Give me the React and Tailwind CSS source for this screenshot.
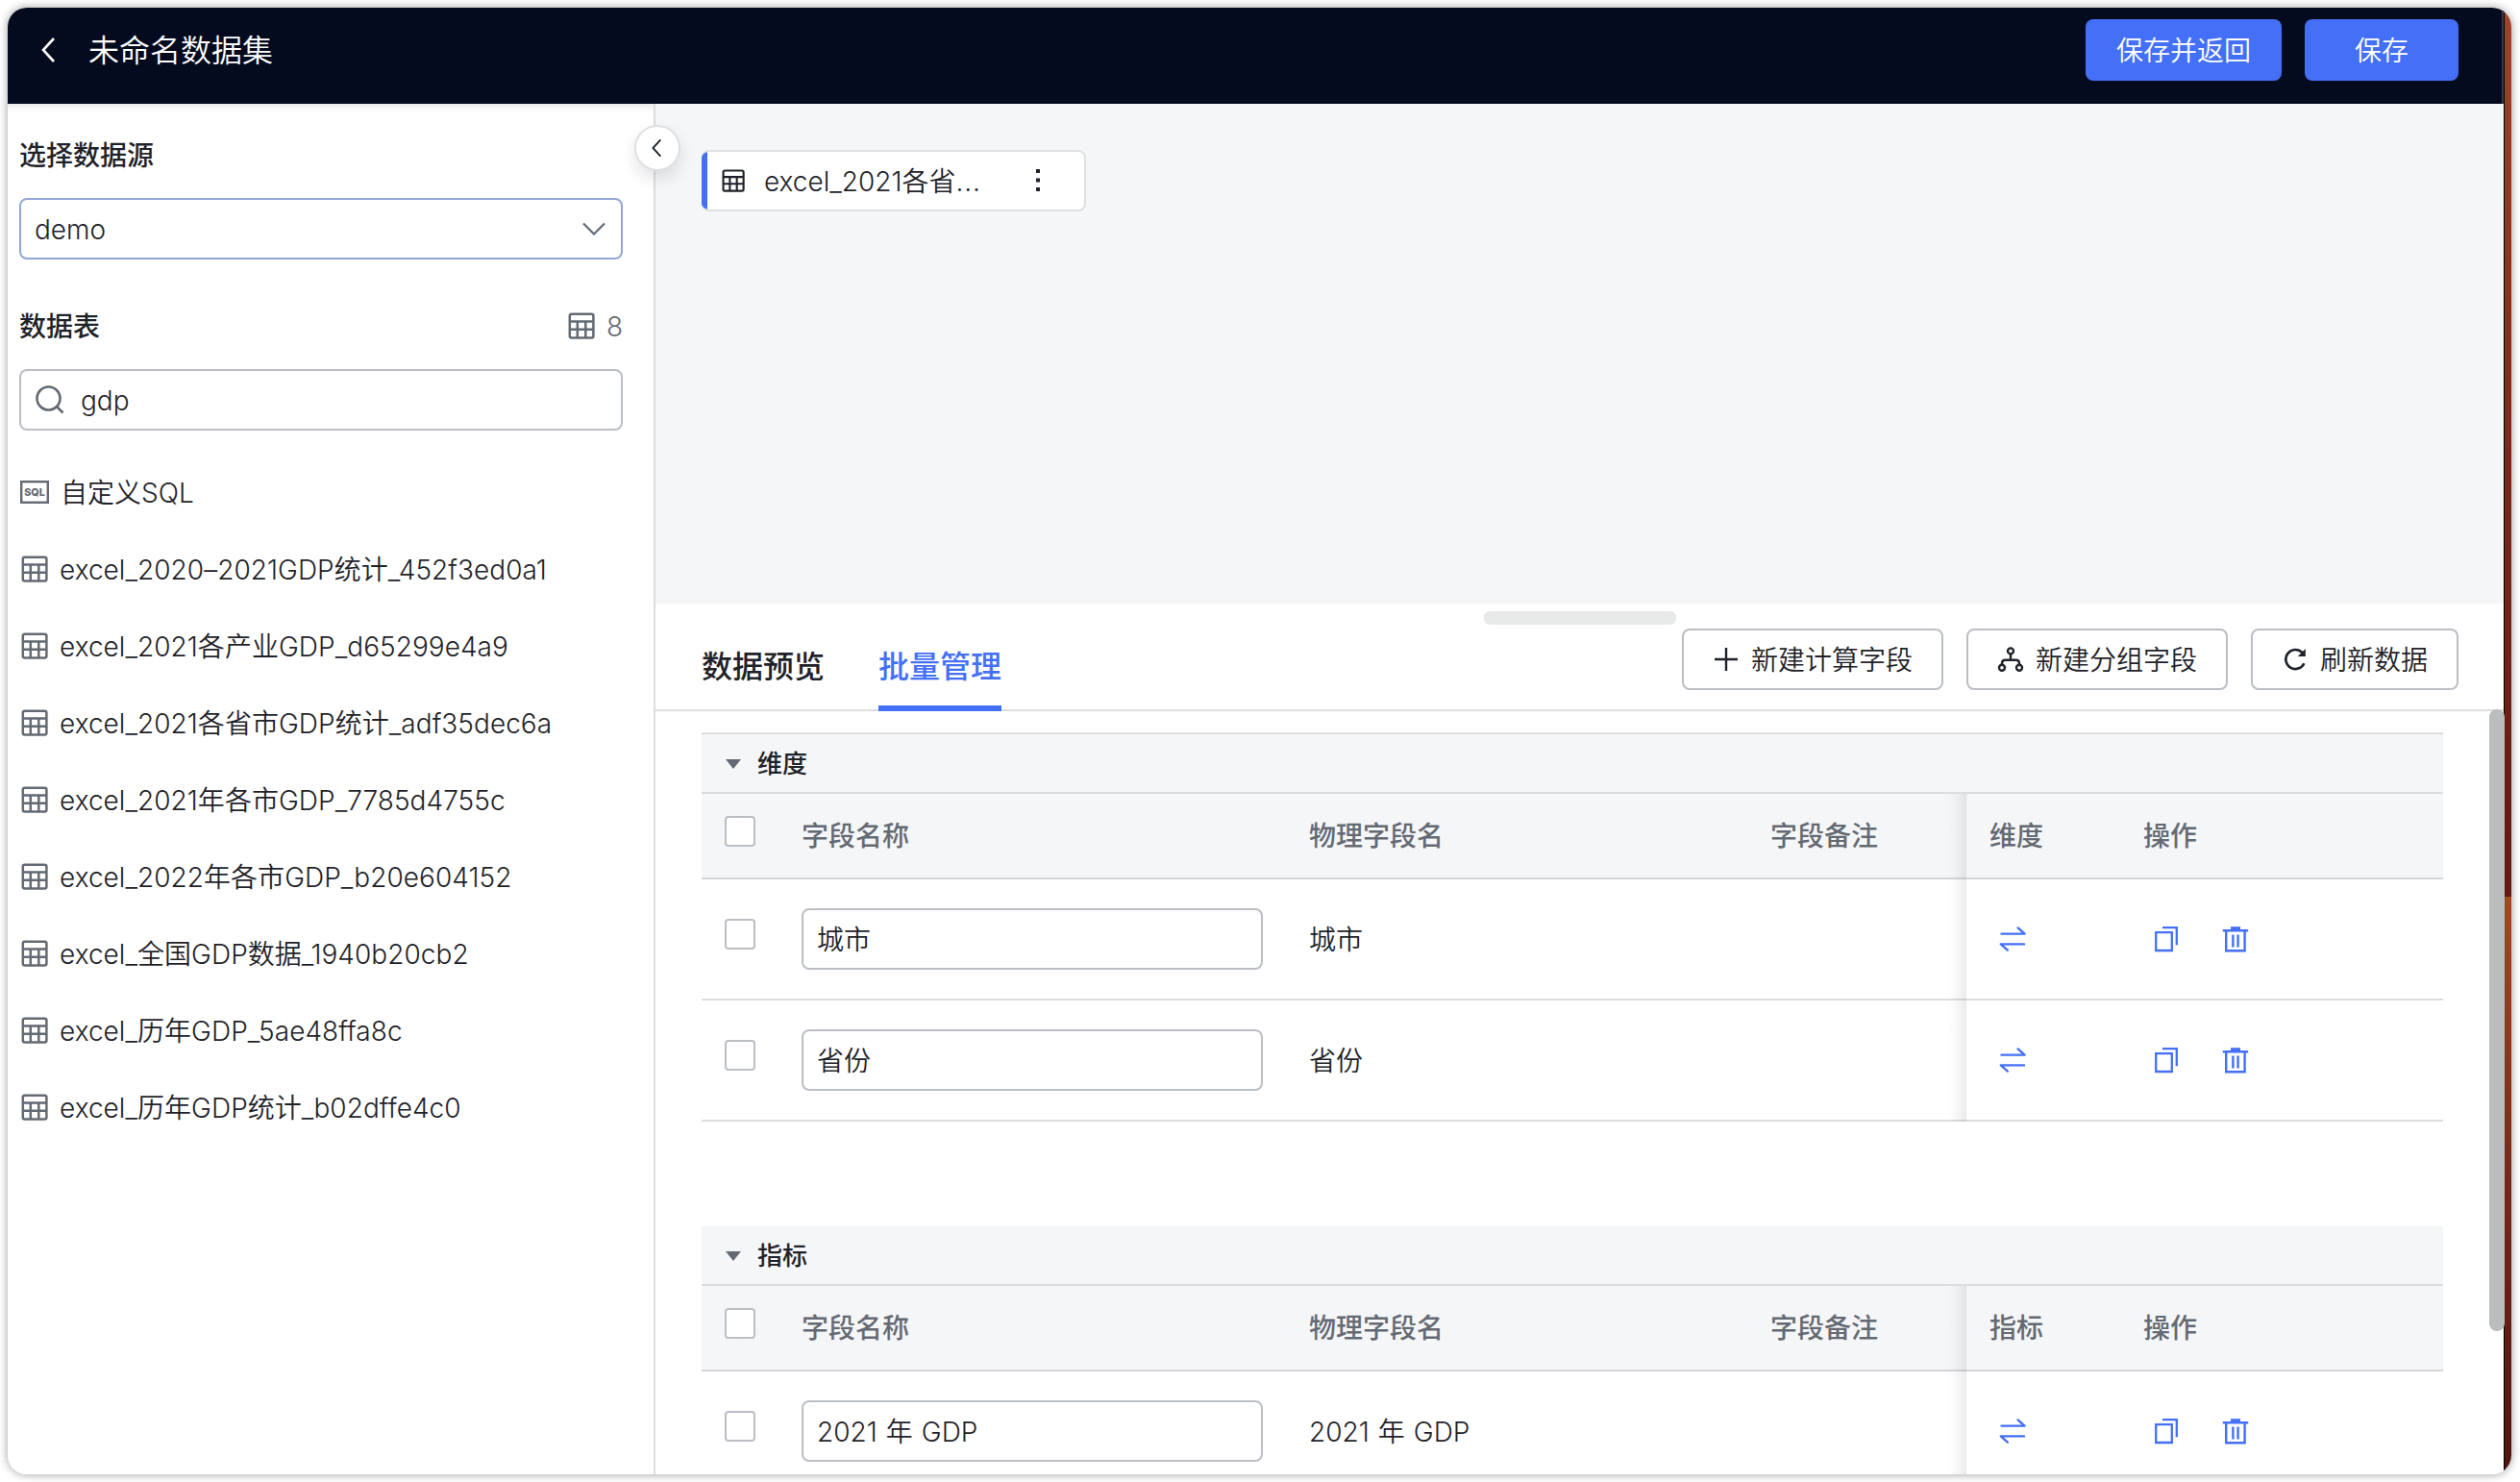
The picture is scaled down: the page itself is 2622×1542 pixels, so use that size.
import React from "react";

const TableIcon = ({ className = "w-7 h-7" }) => (
  <svg viewBox="0 0 28 28" fill="none" stroke="currentColor" strokeWidth="2.5" className={className}>
    <rect x="1.8" y="1.8" width="24.6" height="24.6" rx="2" />
    <path d="M1.8 9.4h24.6M1.8 17.8h24.6M9.8 9.4v17M18.3 9.4v17" />
  </svg>
);

const SqlIcon = () => (
  <svg viewBox="0 0 30 24" className="w-[30px] h-6">
    <rect x="1.2" y="1.2" width="27.6" height="21.6" fill="none" stroke="currentColor" strokeWidth="2.4" />
    <text x="15" y="16.2" textAnchor="middle" fontSize="11" fontWeight="800" fill="currentColor" textLength="21.5" lengthAdjust="spacingAndGlyphs">
      SQL
    </text>
  </svg>
);

const ChevronLeft = ({ className }) => (
  <svg viewBox="0 0 16 28" fill="none" stroke="currentColor" strokeWidth="2.6" className={className}>
    <path d="M14 2L3 14l11 12" />
  </svg>
);

const SwapIcon = () => (
  <svg viewBox="0 0 32 32" fill="none" stroke="currentColor" strokeWidth="2.4" strokeLinecap="round" strokeLinejoin="round" className="w-8 h-8">
    <path d="M4.5 10.6H28.6L21.6 4.4M28 21.4H3.8L10.8 27.6" />
  </svg>
);

const CopyIcon = () => (
  <svg viewBox="0 0 32 32" fill="none" stroke="currentColor" strokeWidth="2.3" className="w-8 h-8">
    <path d="M5.2 9.2h16.6v18.8H5.2zM12 4.2h14.8v18" />
  </svg>
);

const TrashIcon = () => (
  <svg viewBox="0 0 32 32" fill="none" stroke="currentColor" strokeWidth="2.4" className="w-8 h-8">
    <path d="M6.2 7v21.2h19.4V7M2.8 7.2h26.4M13.4 11.4v13M18.6 11.4v13" />
    <path d="M11 3.2h10v4H11z" fill="currentColor" stroke="none" />
  </svg>
);

const Checkbox = ({ className }) => (
  <span className={`block w-8 h-8 bg-white border-2 border-[#bbbfc4] rounded-[4px] ${className}`}></span>
);

const tables = [
  "excel_2020–2021GDP统计_452f3ed0a1",
  "excel_2021各产业GDP_d65299e4a9",
  "excel_2021各省市GDP统计_adf35dec6a",
  "excel_2021年各市GDP_7785d4755c",
  "excel_2022年各市GDP_b20e604152",
  "excel_全国GDP数据_1940b20cb2",
  "excel_历年GDP_5ae48ffa8c",
  "excel_历年GDP统计_b02dffe4c0",
];

const Header = () => (
  <header className="h-[100px] shrink-0 flex items-start justify-between bg-[#050b1e] text-white pl-8 pr-[45px] pt-3 border-r-2 border-[#373b47]">
    <div className="flex items-center h-16">
      <ChevronLeft className="w-4 h-7 ml-0.5" />
      <h1 className="ml-[34px] pt-px text-[32px] font-[350]">未命名数据集</h1>
    </div>
    <div className="flex gap-6">
      <button className="w-[204px] h-16 pt-px rounded-lg bg-[#4370f7]">保存并返回</button>
      <button className="w-40 h-16 pt-px rounded-lg bg-[#4370f7]">保存</button>
    </div>
  </header>
);

const Sidebar = () => (
  <aside className="relative w-[674px] shrink-0 border-r-2 border-[#dcdddf] pl-3 pr-8 shadow-[inset_0_10px_8px_-8px_rgba(0,0,0,0.12)]">
    <h2 className="mt-[33px] h-[42px] leading-[42px] font-medium">选择数据源</h2>
    <div className="mt-[23px] h-16 flex items-center justify-between border-2 border-[#94a6d8] rounded-lg pl-3.5 pr-4">
      <span className="pt-px">demo</span>
      <svg viewBox="0 0 24 14" fill="none" stroke="#646a73" strokeWidth="2.2" className="w-6 h-3.5">
        <path d="M1 1.5l11 11 11-11" />
      </svg>
    </div>

    <div className="mt-12 h-[42px] flex items-center justify-between">
      <h2 className="pt-0.5 font-medium">数据表</h2>
      <div className="flex items-center gap-3 text-[#646a73]">
        <TableIcon />
        <span className="pt-px">8</span>
      </div>
    </div>
    <div className="mt-6 h-16 flex items-center border-2 border-[#bbbfc4] rounded-lg pl-3.5">
      <svg viewBox="0 0 32 32" fill="none" stroke="#646a73" strokeWidth="2.6" className="w-8 h-8">
        <circle cx="14.5" cy="14.5" r="12" />
        <path d="M23 23l6.5 6.5" />
      </svg>
      <span className="ml-4 pt-px">gdp</span>
    </div>

    <ul className="mt-6">
      <li className="h-20 flex items-center">
        <span className="ml-px text-[#646a73]"><SqlIcon /></span>
        <span className="ml-3 pt-px">自定义SQL</span>
      </li>
      {tables.map((name) => (
        <li key={name} className="h-20 flex items-center">
          <TableIcon className="w-7 h-7 ml-0.5 text-[#646a73]" />
          <span className="ml-3 pt-px tracking-[0.04px]">{name}</span>
        </li>
      ))}
    </ul>

    <button className="absolute z-10 top-[22px] -right-[28px] w-12 h-12 rounded-full bg-white border-2 border-[#dee0e3] flex items-center justify-center shadow-[0_8px_16px_rgba(31,35,41,0.12)]">
      <ChevronLeft className="w-3 h-5 -ml-0.5" />
    </button>
  </aside>
);

const Canvas = () => (
  <section className="h-[520px] shrink-0 bg-[#f5f6f7] pl-12 pt-12">
    <div className="w-[400px] h-16 flex items-center bg-white border-2 border-l-0 border-[#dee0e3] rounded-lg overflow-hidden">
      <span className="w-1.5 h-16 bg-[#4370f7]"></span>
      <TableIcon className="w-6 h-6 ml-[15px]" />
      <span className="ml-5 pt-px w-[250px]">excel_2021各省<span className="tracking-[0.8px]">...</span></span>
      <svg viewBox="0 0 4 24" fill="currentColor" className="w-1 h-6 ml-[33px]">
        <path d="M0 0h4v4H0zM0 9.5h4v4H0zM0 19h4v4H0z" />
      </svg>
    </div>
  </section>
);

const ToolButton = ({ icon, children }) => (
  <button className="h-16 px-[30px] flex items-center border-2 border-[#bbbfc4] rounded-lg">
    {icon}
    <span className="ml-3 pt-px">{children}</span>
  </button>
);

const Toolbar = () => (
  <div className="relative h-28 shrink-0 pl-12 pr-[47px] flex justify-between border-b-2 border-[#dcdddf]">
    <span className="absolute left-[862px] top-2 w-[200px] h-3.5 rounded-md bg-[#e8eae9]"></span>
    <nav className="flex gap-14 text-[32px] font-medium">
      <a className="h-28 pt-[42px] leading-[48px]">数据预览</a>
      <a className="h-28 pt-[42px] leading-[48px] text-[#4370f7] border-b-6 border-[#4370f7]">批量管理</a>
    </nav>
    <div className="flex gap-6 pt-[26px]">
      <ToolButton
        icon={
          <svg viewBox="0 0 28 28" fill="none" stroke="currentColor" strokeWidth="2.4" className="w-7 h-7">
            <path d="M14 2v24M2 14h24" />
          </svg>
        }
      >
        新建计算字段
      </ToolButton>
      <ToolButton
        icon={
          <svg viewBox="0 0 28 28" fill="none" stroke="currentColor" strokeWidth="2.4" className="w-7 h-7">
            <circle cx="14" cy="5.4" r="3" />
            <circle cx="5" cy="22.8" r="3" />
            <circle cx="23" cy="22.8" r="3" />
            <path d="M14 8.4v6.4M5 19.8v-1.6q0-3.4 3.4-3.4h11.2q3.4 0 3.4 3.4v1.6" />
          </svg>
        }
      >
        新建分组字段
      </ToolButton>
      <ToolButton
        icon={
          <svg viewBox="0 0 28 28" fill="none" stroke="currentColor" strokeWidth="2.6" className="w-7 h-7">
            <path d="M23.4 18.2A10 10 0 1 1 21.4 7l2 2.4" />
            <path d="M24.8 3v8h-8z" fill="currentColor" stroke="none" />
          </svg>
        }
      >
        刷新数据
      </ToolButton>
    </div>
  </div>
);

const COLS = "grid grid-cols-[104px_528px_480px_204px_160px_336px]";

const PinnedShadow = () => (
  <span className="absolute left-[1296px] top-0 -bottom-0.5 w-5 bg-linear-to-l from-black/8 via-black/3 to-transparent"></span>
);

const FieldGroup = ({ title, rows, className }) => (
  <div className={className}>
    <div className="h-[62px] flex items-center border-b-2 border-[#dcdddf] bg-[#f5f6f7] text-[26px] font-medium">
      <svg viewBox="0 0 16 10" fill="#646a73" className="w-4 h-2.5 ml-[25px] mt-0.5">
        <path d="M0 0h16L8 10z" />
      </svg>
      <span className="ml-[17px]">{title}</span>
    </div>
    <div className={`${COLS} relative h-[89px] items-center border-b-2 border-[#d3d5d8] bg-[#f5f6f7] text-[#646a73] font-medium`}>
      <div className="pl-6"><Checkbox className="-mt-[9px]" /></div>
      <div>字段名称</div>
      <div>物理字段名</div>
      <div>字段备注</div>
      <div className="pl-6">{title}</div>
      <div className="pl-6">操作</div>
      <PinnedShadow />
    </div>
    {rows.map((name) => (
      <div key={name} className={`${COLS} relative h-[126px] items-center border-b-2 border-[#dcdddf] [word-spacing:1.2px]`}>
        <div className="pl-6"><Checkbox className="-mt-2.5" /></div>
        <div className="w-[480px] h-16 px-3.5 pt-px flex items-center border-2 border-[#bbbfc4] rounded-lg">{name}</div>
        <div className="pt-px">{name}</div>
        <div></div>
        <div className="pl-8 text-[#4370f7]"><SwapIcon /></div>
        <div className="pl-8 flex gap-10 text-[#4370f7]">
          <CopyIcon />
          <TrashIcon />
        </div>
        <PinnedShadow />
      </div>
    ))}
  </div>
);

const App = () => {
  return (
    <div className="w-[2622px] h-[1542px] bg-white pl-2 pt-2 overflow-hidden text-[28px] text-[#1f2329] font-['Inter','Noto_Sans_CJK_SC',sans-serif] font-[350]">
      <div className="w-[2605px] h-[1526px] flex rounded-[20px] overflow-hidden shadow-[0_0_10px_rgba(0,0,0,0.4)]">
        <div className="w-[2597px] shrink-0 flex flex-col bg-white">
          <Header />
          <div className="flex flex-1 min-h-0">
            <Sidebar />
            <main className="flex-1 min-w-0 flex flex-col">
              <Canvas />
              <Toolbar />
              <div className="flex-1 min-h-0 pl-12 pr-[63px] pt-[22px] overflow-hidden">
                <FieldGroup title="维度" rows={["城市", "省份"]} className="border-t-2 border-[#dcdddf]" />
                <FieldGroup title="指标" rows={["2021 年 GDP"]} className="mt-[109px]" />
              </div>
            </main>
          </div>
        </div>
        <div className="w-2 shrink-0 flex flex-col border-l border-black">
          <div className="h-[925px] bg-linear-to-b from-[#9c452c] via-[#7a2a1b] to-[#5f1a12]"></div>
          <div className="flex-1 bg-linear-to-b from-[#a04a22] via-[#74281a] to-[#4e150f]"></div>
        </div>
      </div>
      {/* overlay scrollbar */}
      <span className="absolute left-[2590px] top-[738px] w-4 h-[647px] rounded-full bg-[#bbbcbe]"></span>
    </div>
  );
};

export default App;
